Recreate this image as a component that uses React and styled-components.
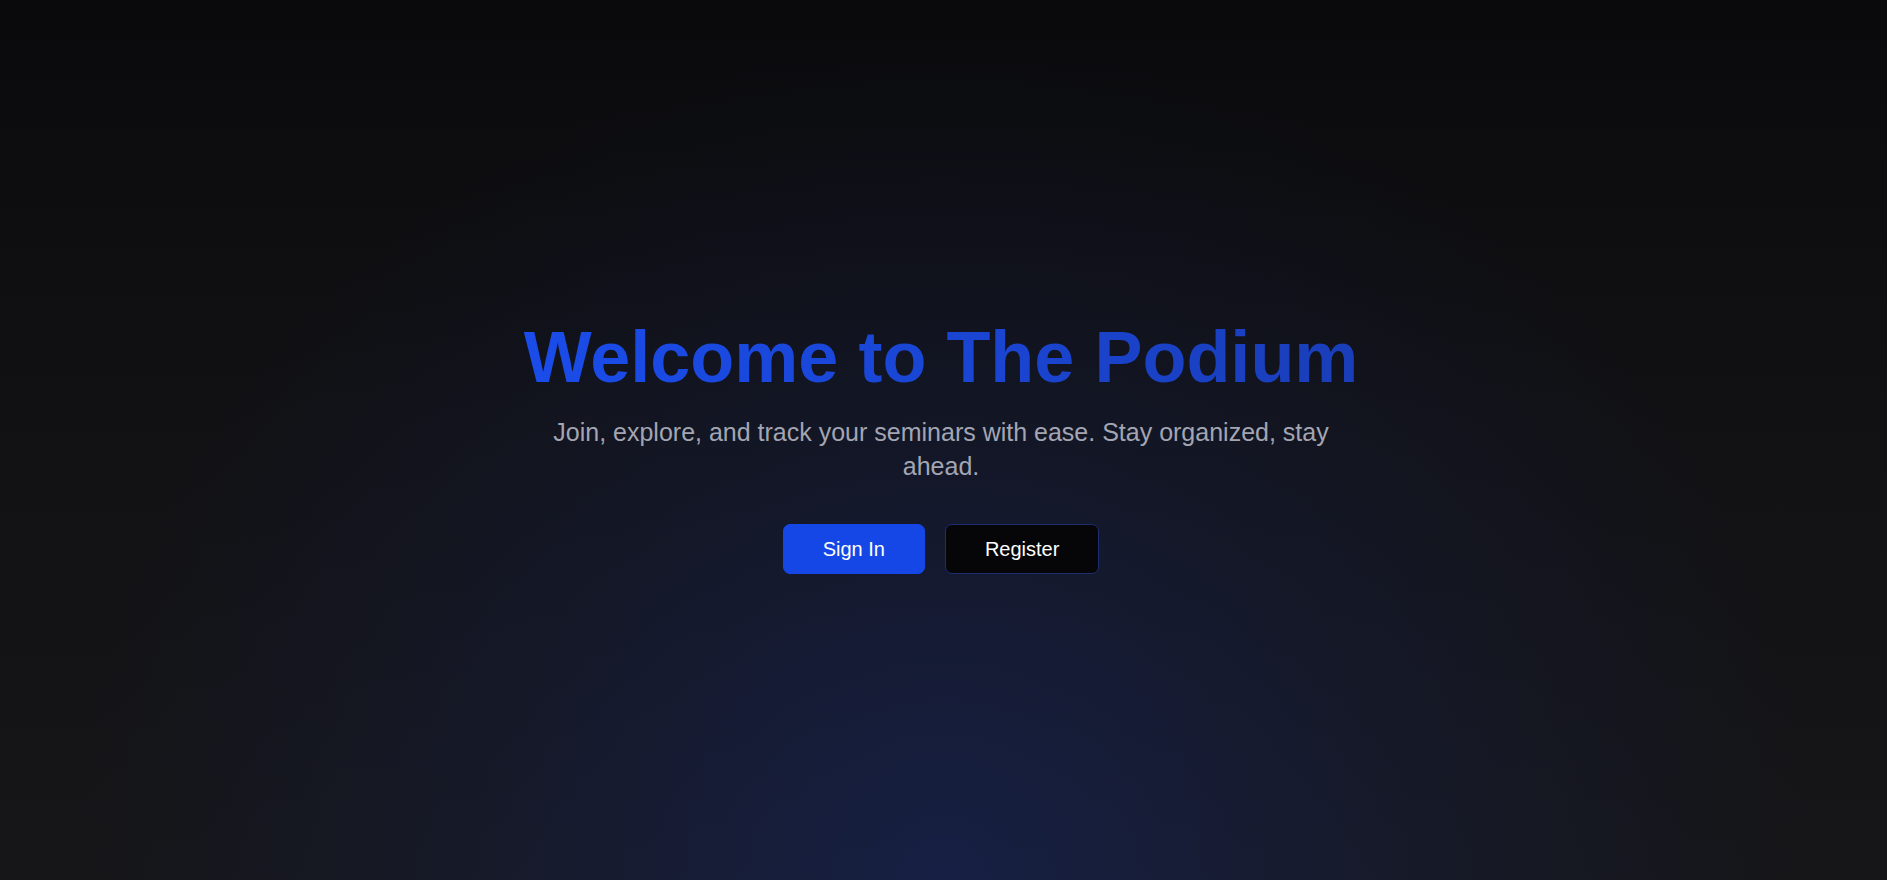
import React from "react";
import styled, { createGlobalStyle } from "styled-components";

const GlobalStyle = createGlobalStyle`
  * { box-sizing: border-box; }
  html, body { margin: 0; padding: 0; }
  body {
    font-family: "Liberation Sans", Arial, sans-serif;
    background: #0a0a0c;
  }
`;

const Page = styled.main`
  min-height: 100vh;
  display: flex;
  align-items: center;
  justify-content: center;
  padding: 11px 5px 0 0;
  background:
    radial-gradient(ellipse 46% 95% at 50% 100%, rgba(24, 42, 112, 0.5) 0%, rgba(24, 42, 112, 0.18) 55%, rgba(24, 42, 112, 0) 100%),
    linear-gradient(to bottom, #0a0a0c 0%, #111114 45%, #161618 100%);
`;

const Hero = styled.section`
  display: flex;
  flex-direction: column;
  align-items: center;
  text-align: center;
`;

const Title = styled.h1`
  margin: 0;
  font-size: 72px;
  line-height: 80px;
  font-weight: 700;
  background: linear-gradient(to right, #1a4cea 0%, #1a45d2 55%, #1a3eb9 100%);
  -webkit-background-clip: text;
  background-clip: text;
  color: transparent;
`;

const Subtitle = styled.p`
  margin: 18px 0 0;
  max-width: 800px;
  font-size: 25px;
  line-height: 34px;
  color: #a3a5b3;
`;

const Actions = styled.div`
  display: flex;
  gap: 20px;
  margin-top: 41px;
`;

const Button = styled.button`
  height: 50px;
  padding: 0 39px;
  border-radius: 7px;
  font-family: "Liberation Sans", Arial, sans-serif;
  font-size: 20px;
  line-height: 30px;
  color: #ffffff;
  cursor: pointer;
  border: 1px solid ${(p) => (p.$variant === "primary" ? "#1447e6" : "#1d2d74")};
  background: ${(p) => (p.$variant === "primary" ? "#1447e6" : "#060608")};
`;

export default function App() {
  return (
    <>
      <GlobalStyle />
      <Page>
        <Hero>
          <Title>Welcome to The Podium</Title>
          <Subtitle>
            Join, explore, and track your seminars with ease. Stay organized, stay ahead.
          </Subtitle>
          <Actions>
            <Button $variant="primary">Sign In</Button>
            <Button $variant="secondary">Register</Button>
          </Actions>
        </Hero>
      </Page>
    </>
  );
}
